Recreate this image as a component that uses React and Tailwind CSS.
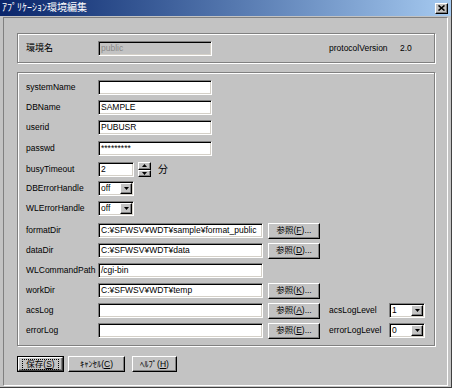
import React from "react";

const JP = "font-['Liberation_Sans','Noto_Sans_CJK_JP',sans-serif]";

function Field({ w, value = "", disabled = false }) {
  return (
    <div
      className={`h-[15px] ${w} border border-t-[#808080] border-l-[#808080] border-b-white border-r-white shadow-[inset_1px_1px_0_#000,inset_-1px_-1px_0_#d4d0c8] ${
        disabled ? "bg-[#c3c3c3] text-[#8a8a8a]" : "bg-white text-black"
      } flex items-center pl-[2px] overflow-hidden whitespace-nowrap text-[8.5px] leading-none`}
    >
      {value}
    </div>
  );
}

function Btn({ w, children, def = false }) {
  if (def) {
    return (
      <div className={`h-[16px] ${w} border border-black`}>
        <div className="h-full w-full flex items-center justify-center bg-[#c3c3c3] border border-t-white border-l-white border-b-[#404040] border-r-[#404040] shadow-[inset_-1px_-1px_0_#808080]">
          <span className={`px-[3px] outline outline-1 outline-dotted outline-black text-[8.5px] leading-[9px] ${JP}`}>{children}</span>
        </div>
      </div>
    );
  }
  return (
    <div className={`h-[16px] ${w}`}>
      <div
        className={`h-full w-full flex items-center justify-center bg-[#c3c3c3] border border-t-white border-l-white border-b-black border-r-black shadow-[inset_-1px_-1px_0_#808080] text-[8.5px] leading-none whitespace-nowrap ${JP}`}
      >
        {children}
      </div>
    </div>
  );
}

function Select({ value }) {
  return (
    <div className="h-[15px] w-[36px] border border-t-[#808080] border-l-[#808080] border-b-white border-r-white shadow-[inset_1px_1px_0_#000,inset_-1px_-1px_0_#d4d0c8] bg-white flex items-stretch p-[1px]">
      <div className="flex-1 flex items-center pl-[1px] text-[8.5px] leading-none">{value}</div>
      <div className="w-[12px] flex items-center justify-center bg-[#c3c3c3] border border-t-white border-l-white border-b-black border-r-black shadow-[inset_-1px_-1px_0_#808080]">
        <svg width="5" height="3" viewBox="0 0 5 3" className="block">
          <polygon points="0,0 5,0 2.5,3" fill="#000" />
        </svg>
      </div>
    </div>
  );
}

function Spin() {
  return (
    <div className="h-[15px] w-[13px] flex flex-col">
      <div className="flex-1 flex items-center justify-center bg-[#c3c3c3] border border-t-white border-l-white border-b-black border-r-black shadow-[inset_-1px_-1px_0_#808080]">
        <svg width="5" height="3" viewBox="0 0 5 3" className="block">
          <polygon points="0,3 5,3 2.5,0" fill="#000" />
        </svg>
      </div>
      <div className="flex-1 flex items-center justify-center bg-[#c3c3c3] border border-t-white border-l-white border-b-black border-r-black shadow-[inset_-1px_-1px_0_#808080]">
        <svg width="5" height="3" viewBox="0 0 5 3" className="block">
          <polygon points="0,0 5,0 2.5,3" fill="#000" />
        </svg>
      </div>
    </div>
  );
}

function Label({ children, w = "w-[72px]" }) {
  return <div className={`${w} shrink-0 text-[8.5px] leading-none whitespace-nowrap`}>{children}</div>;
}

function Row({ mt, children }) {
  return <div className={`h-[15px] flex items-center ${mt}`}>{children}</div>;
}

function Ref({ k }) {
  return (
    <Btn w="w-[52px]">
      参照(<u>{k}</u>)...
    </Btn>
  );
}

export default function App() {
  return (
    <div className={`w-[452px] h-[388px] bg-[#c3c3c3] flex flex-col overflow-hidden text-black ${JP} border-b border-r border-[#404040]`}>
      {/* title bar */}
      <div className="h-[16px] shrink-0 flex items-center justify-between bg-linear-to-r from-[#0a246a] to-[#a6caf0] pl-[2px] pr-[3px]">
        <span className={`text-white text-[10px] leading-none ${JP}`}>ｱﾌﾟﾘｹｰｼｮﾝ環境編集</span>
        <div className="w-[13px] h-[11px] flex items-center justify-center bg-[#c3c3c3] border border-t-white border-l-white border-b-black border-r-black shadow-[inset_-1px_-1px_0_#808080]">
          <svg width="7" height="6" viewBox="0 0 7 6" className="block">
            <path d="M0.5 0.5 L6.5 5.5 M6.5 0.5 L0.5 5.5" stroke="#000" strokeWidth="1.6" />
          </svg>
        </div>
      </div>

      {/* panel */}
      <div className="mx-[3px] mt-[1px] mb-[1px] flex-1 border border-t-[#808080] border-l-[#808080] border-b-white border-r-white flex flex-col pl-[13px] pt-[15px]">
        {/* group 1 */}
        <div className="w-[418px] h-[30px] shrink-0 border border-[#808080] shadow-[inset_1px_1px_0_#fff,1px_1px_0_#fff] flex items-center pl-[8px]">
          <div className="w-[72px] shrink-0 text-[9px] leading-none">環境名</div>
          <Field w="w-[114px]" value="public" disabled />
          <div className="ml-[117px] w-[71px] text-[8.5px] leading-none">protocolVersion</div>
          <div className="text-[8.5px] leading-none">2.0</div>
        </div>

        {/* group 2 */}
        <div className="mt-[9px] w-[418px] h-[274px] shrink-0 border border-[#808080] shadow-[inset_1px_1px_0_#fff,1px_1px_0_#fff] flex flex-col pl-[8px] pt-[7px]">
          <Row mt="mt-0">
            <Label>systemName</Label>
            <Field w="w-[114px]" />
          </Row>
          <Row mt="mt-[5px]">
            <Label>DBName</Label>
            <Field w="w-[114px]" value="SAMPLE" />
          </Row>
          <Row mt="mt-[5px]">
            <Label>userid</Label>
            <Field w="w-[114px]" value="PUBUSR" />
          </Row>
          <Row mt="mt-[6px]">
            <Label>passwd</Label>
            <Field w="w-[114px]" value="*********" />
          </Row>
          <Row mt="mt-[6px]">
            <Label>busyTimeout</Label>
            <Field w="w-[36px]" value="2" />
            <div className="ml-[4px]">
              <Spin />
            </div>
            <span className="ml-[7px] text-[10px] leading-none">分</span>
          </Row>
          <Row mt="mt-[4px]">
            <Label>DBErrorHandle</Label>
            <Select value="off" />
          </Row>
          <Row mt="mt-[5px]">
            <Label>WLErrorHandle</Label>
            <Select value="off" />
          </Row>
          <Row mt="mt-[7px]">
            <Label>formatDir</Label>
            <Field w="w-[165px]" value="C:¥SFWSV¥WDT¥sample¥format_public" />
            <div className="ml-[5px]">
              <Ref k="F" />
            </div>
          </Row>
          <Row mt="mt-[5px]">
            <Label>dataDir</Label>
            <Field w="w-[165px]" value="C:¥SFWSV¥WDT¥data" />
            <div className="ml-[5px]">
              <Ref k="D" />
            </div>
          </Row>
          <Row mt="mt-[5px]">
            <Label>WLCommandPath</Label>
            <Field w="w-[165px]" value="/cgi-bin" />
          </Row>
          <Row mt="mt-[5px]">
            <Label>workDir</Label>
            <Field w="w-[165px]" value="C:¥SFWSV¥WDT¥temp" />
            <div className="ml-[5px]">
              <Ref k="K" />
            </div>
          </Row>
          <Row mt="mt-[5px]">
            <Label>acsLog</Label>
            <Field w="w-[165px]" />
            <div className="ml-[5px]">
              <Ref k="A" />
            </div>
            <div className="ml-[9px]">
              <Label w="w-[60px]">acsLogLevel</Label>
            </div>
            <Select value="1" />
          </Row>
          <Row mt="mt-[5px]">
            <Label>errorLog</Label>
            <Field w="w-[165px]" />
            <div className="ml-[5px]">
              <Ref k="E" />
            </div>
            <div className="ml-[9px]">
              <Label w="w-[60px]">errorLogLevel</Label>
            </div>
            <Select value="0" />
          </Row>
        </div>

        {/* bottom buttons */}
        <div className="mt-[10px] flex items-center">
          <Btn w="w-[47px]" def>
            保存(<u>S</u>)
          </Btn>
          <div className="ml-[4px]">
            <Btn w="w-[57px]">
              ｷｬﾝｾﾙ(<u>C</u>)
            </Btn>
          </div>
          <div className="ml-[7px]">
            <Btn w="w-[45px]">
              ﾍﾙﾌﾟ(<u>H</u>)
            </Btn>
          </div>
        </div>
      </div>
    </div>
  );
}
